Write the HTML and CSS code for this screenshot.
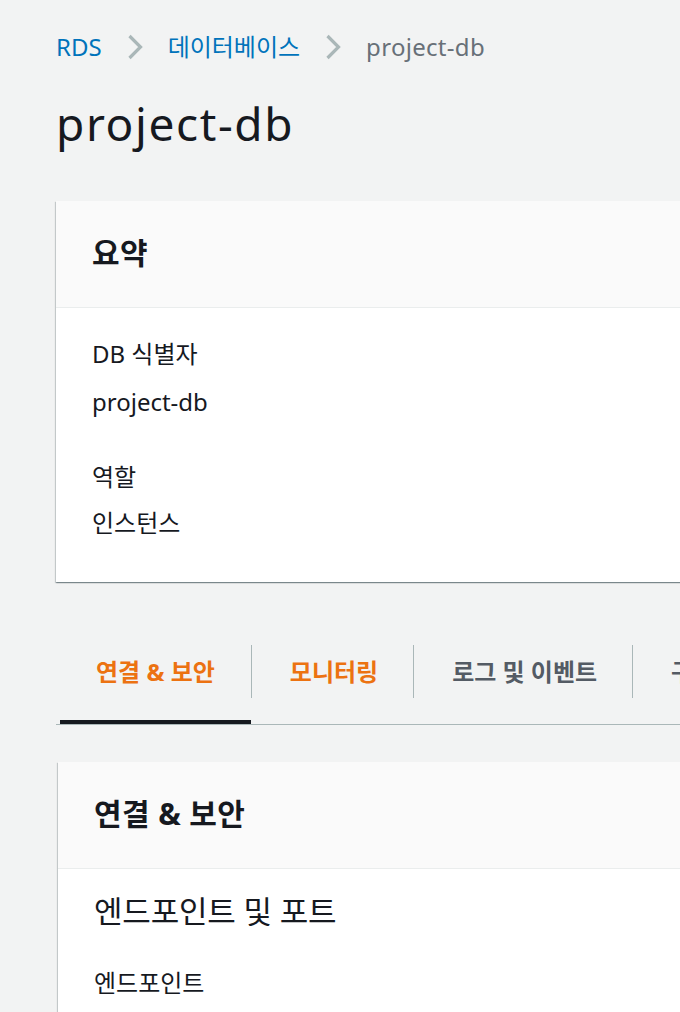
FILE: index.html
```html
<!DOCTYPE html>
<html lang="ko">
<head>
<meta charset="utf-8">
<title>project-db</title>
<link rel="stylesheet" href="styles.css">
</head>
<body>
<main class="page">
  <nav class="breadcrumbs">
    <a class="crumb-link en" href="#">RDS</a>
    <svg class="chevron" width="16" height="26" viewBox="0 0 16 26"><polyline points="2.5,2 13.5,13 2.5,24" fill="none" stroke="#aab7b8" stroke-width="3.2"/></svg>
    <a class="crumb-link ko" href="#">데이터베이스</a>
    <svg class="chevron" width="16" height="26" viewBox="0 0 16 26"><polyline points="2.5,2 13.5,13 2.5,24" fill="none" stroke="#aab7b8" stroke-width="3.2"/></svg>
    <span class="crumb-current en">project-db</span>
  </nav>

  <h1 class="title">project-db</h1>

  <section class="card">
    <header class="card-header">
      <h2 class="card-title">요약</h2>
    </header>
    <div class="card-body">
      <div class="pair">
        <div class="label ko">DB 식별자</div>
        <div class="value en">project-db</div>
      </div>
      <div class="pair">
        <div class="label ko">역할</div>
        <div class="value ko">인스턴스</div>
      </div>
    </div>
  </section>

  <ul class="tabs">
    <li class="tab active"><a class="tab-link first" href="#">연결 &amp; 보안</a></li>
    <li class="tab hover"><a class="tab-link" href="#">모니터링</a></li>
    <li class="tab"><a class="tab-link" href="#">로그 및 이벤트</a></li>
    <li class="tab"><a class="tab-link" href="#">구성</a></li>
    <li class="tab"><a class="tab-link" href="#">유지 관리 및 백업</a></li>
  </ul>

  <section class="card card-panel">
    <header class="card-header">
      <h2 class="card-title">연결 &amp; 보안</h2>
    </header>
    <div class="card-body panel-body">
      <h3 class="sub-title">엔드포인트 및 포트</h3>
      <div class="label ko sub-label">엔드포인트</div>
    </div>
  </section>
</main>
</body>
</html>
```

FILE: styles.css
```css
html, body {
  margin: 0;
  padding: 0;
  overflow: hidden;
  background: #f2f3f3;
}

body {
  font-family: "Noto Sans", "Noto Sans CJK KR", sans-serif;
  color: #16191f;
}

.page {
  width: 1100px;
  padding: 27px 0 0 56px;
  box-sizing: border-box;
}

/* breadcrumbs */
.breadcrumbs {
  display: flex;
  align-items: center;
  gap: 25px;
  height: 40px;
}

.crumb-link,
.crumb-current {
  text-decoration: none;
  line-height: 40px;
}

.crumb-link {
  color: #0073bb;
}

.crumb-current {
  color: #687078;
  letter-spacing: 0.3px;
}

.en {
  font-size: 24px;
}

.ko {
  font-size: 24px;
}

.chevron {
  display: block;
  flex: none;
}

/* title */
.title {
  margin: 28px 0 0;
  font-size: 46px;
  line-height: 56px;
  font-weight: 400;
  letter-spacing: 1.6px;
  color: #16191f;
}

/* card */
.card {
  margin-top: 50px;
  background: #ffffff;
  box-shadow: 0 1px 1px 0 rgba(0, 28, 36, 0.3),
              1px 1px 1px 0 rgba(0, 28, 36, 0.15),
              -1px 1px 1px 0 rgba(0, 28, 36, 0.15);
}

.card-header {
  background: #fafafa;
  padding: 32px 36px 34px;
  border-bottom: 1px solid #eaeded;
}

.card-title {
  margin: 0;
  font-size: 30px;
  line-height: 40px;
  font-weight: 700;
  letter-spacing: 0.4px;
}

.card-body {
  padding: 26px 36px 39px;
}

.pair + .pair {
  margin-top: 37px;
}

.label,
.value {
  line-height: 40px;
}

.value {
  margin-top: 6px;
}

.value.en {
  position: relative;
  top: 2px;
}

/* tabs */
.tabs {
  list-style: none;
  margin: 63px 0 0;
  padding: 0 0 0 4px;
  display: flex;
  border-bottom: 1px solid #aab7b8;
}

.tab {
  padding-bottom: 22px;
  border-bottom: 4px solid transparent;
  flex: none;
}

.tab.active {
  border-bottom-color: #16191f;
}

.tab-link {
  display: block;
  height: 53px;
  line-height: 53px;
  padding: 0 35px 0 38px;
  border-left: 1px solid #aab7b8;
  font-size: 24px;
  font-weight: 700;
  color: #545b64;
  text-decoration: none;
  white-space: nowrap;
}

.tab-link.first {
  border-left: none;
  padding: 0 36px 0 36px;
}

.tab.active .tab-link,
.tab.hover .tab-link {
  color: #ec7211;
}

/* connection panel */
.card-panel {
  margin-top: 37px;
  margin-left: 2px;
}

.panel-body {
  padding-top: 22px;
}

.sub-title {
  margin: 0;
  font-size: 31px;
  line-height: 40px;
  font-weight: 400;
  letter-spacing: -0.2px;
}

.sub-label {
  margin-top: 32px;
}
```
